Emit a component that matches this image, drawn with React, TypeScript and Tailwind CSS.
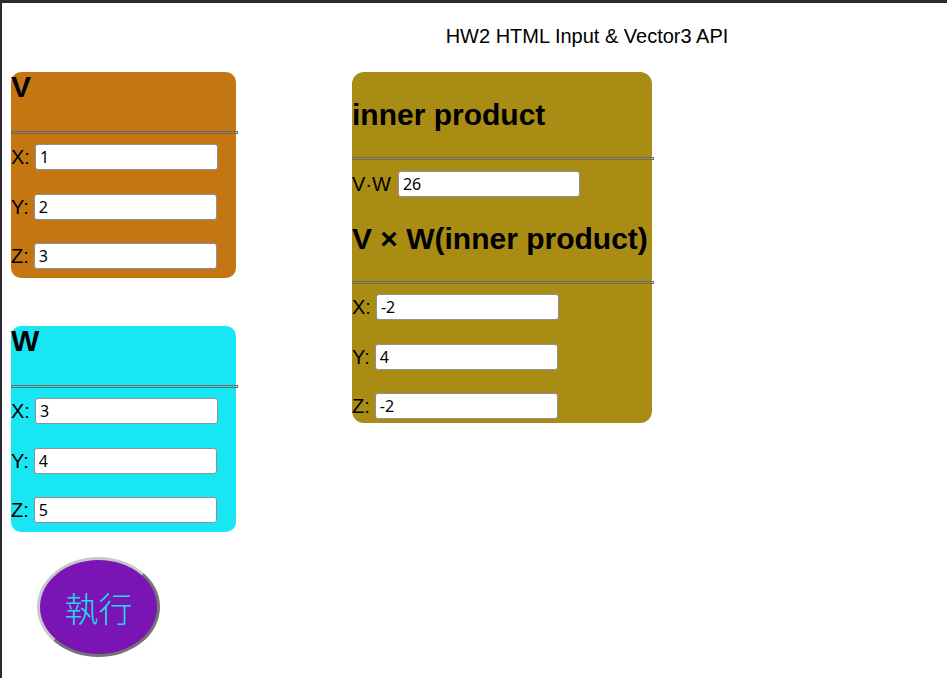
import React from 'react';

const labelFont = { fontFamily: '"Liberation Sans", Arial, sans-serif' };

function Field({ label, value, gap = 5, width = 183 }: { label: string; value: string; gap?: number; width?: number }) {
  return (
    <div className="flex items-center h-[26px] text-[20px] leading-[26px] text-black">
      <span>{label}</span>
      <input
        readOnly
        value={value}
        style={{ marginLeft: gap, width }}
        className="h-[26px] border border-[#8f8f9d] rounded-[3px] bg-white pl-[4px] text-[16px] text-black font-['Noto_Sans',sans-serif] outline-none"
      />
    </div>
  );
}

function Rule({ width }: { width: number }) {
  return <div style={{ width }} className="h-[3px] border border-[#6b6b6b] shrink-0" />;
}

function VectorCard({ name, color, values }: { name: string; color: string; values: string[] }) {
  return (
    <div className={`w-[225px] rounded-[10px] pb-[9px] ${color}`}>
      <h1 className="text-[30px] leading-[30px] font-bold text-black">{name}</h1>
      <div className="mt-[29px]">
        <Rule width={227} />
      </div>
      <div className="mt-[10px] flex flex-col gap-[23.5px]">
        <Field label="X:" value={values[0]} />
        <Field label="Y:" value={values[1]} />
        <Field label="Z:" value={values[2]} />
      </div>
    </div>
  );
}

export default function App() {
  return (
    <div
      style={labelFont}
      className="min-h-[678px] bg-white border-t-[3px] border-l-[2px] border-[#2b2a33]"
    >
      {/* Title */}
      <div className="pt-[22px] pl-[225px] text-center text-[20px] leading-[23px] text-black">
        HW2 HTML Input &amp; Vector3 API
      </div>

      <div className="mt-[24px] flex items-start pl-[9px]">
        {/* Left column: V, W, button */}
        <div className="flex flex-col">
          <VectorCard name="V" color="bg-[#c47613]" values={['1', '2', '3']} />
          <div className="mt-[48px]">
            <VectorCard name="W" color="bg-[#19e6f3]" values={['3', '4', '5']} />
          </div>
          <button
            className="mt-[25px] ml-[26px] w-[123px] h-[100px] rounded-[50%] bg-[#7a14b4] border-[3px] [border-style:outset] border-[#c8c8c8] text-[34px] text-[#22d8ee] font-light flex items-center justify-center"
            style={{ fontFamily: '"Noto Sans CJK TC", "Noto Sans CJK SC", sans-serif' }}
          >
            執行
          </button>
        </div>

        {/* Result card */}
        <div className="ml-[116px] w-[300px] rounded-[12px] bg-[#a98c14] pt-[28px] pb-[4px]">
          <h1 className="text-[30px] leading-[30px] font-bold text-black">inner product</h1>
          <div className="mt-[27px]">
            <Rule width={302} />
          </div>
          <div className="mt-[11px]">
            <Field label="V·W" value="26" gap={7} width={182} />
          </div>
          <h1 className="mt-[27px] text-[30px] leading-[30px] font-bold text-black">V × W(inner product)</h1>
          <div className="mt-[27px]">
            <Rule width={302} />
          </div>
          <div className="mt-[10px] flex flex-col gap-[23.5px]">
            <Field label="X:" value="-2" />
            <Field label="Y:" value="4" />
            <Field label="Z:" value="-2" />
          </div>
        </div>
      </div>
    </div>
  );
}
